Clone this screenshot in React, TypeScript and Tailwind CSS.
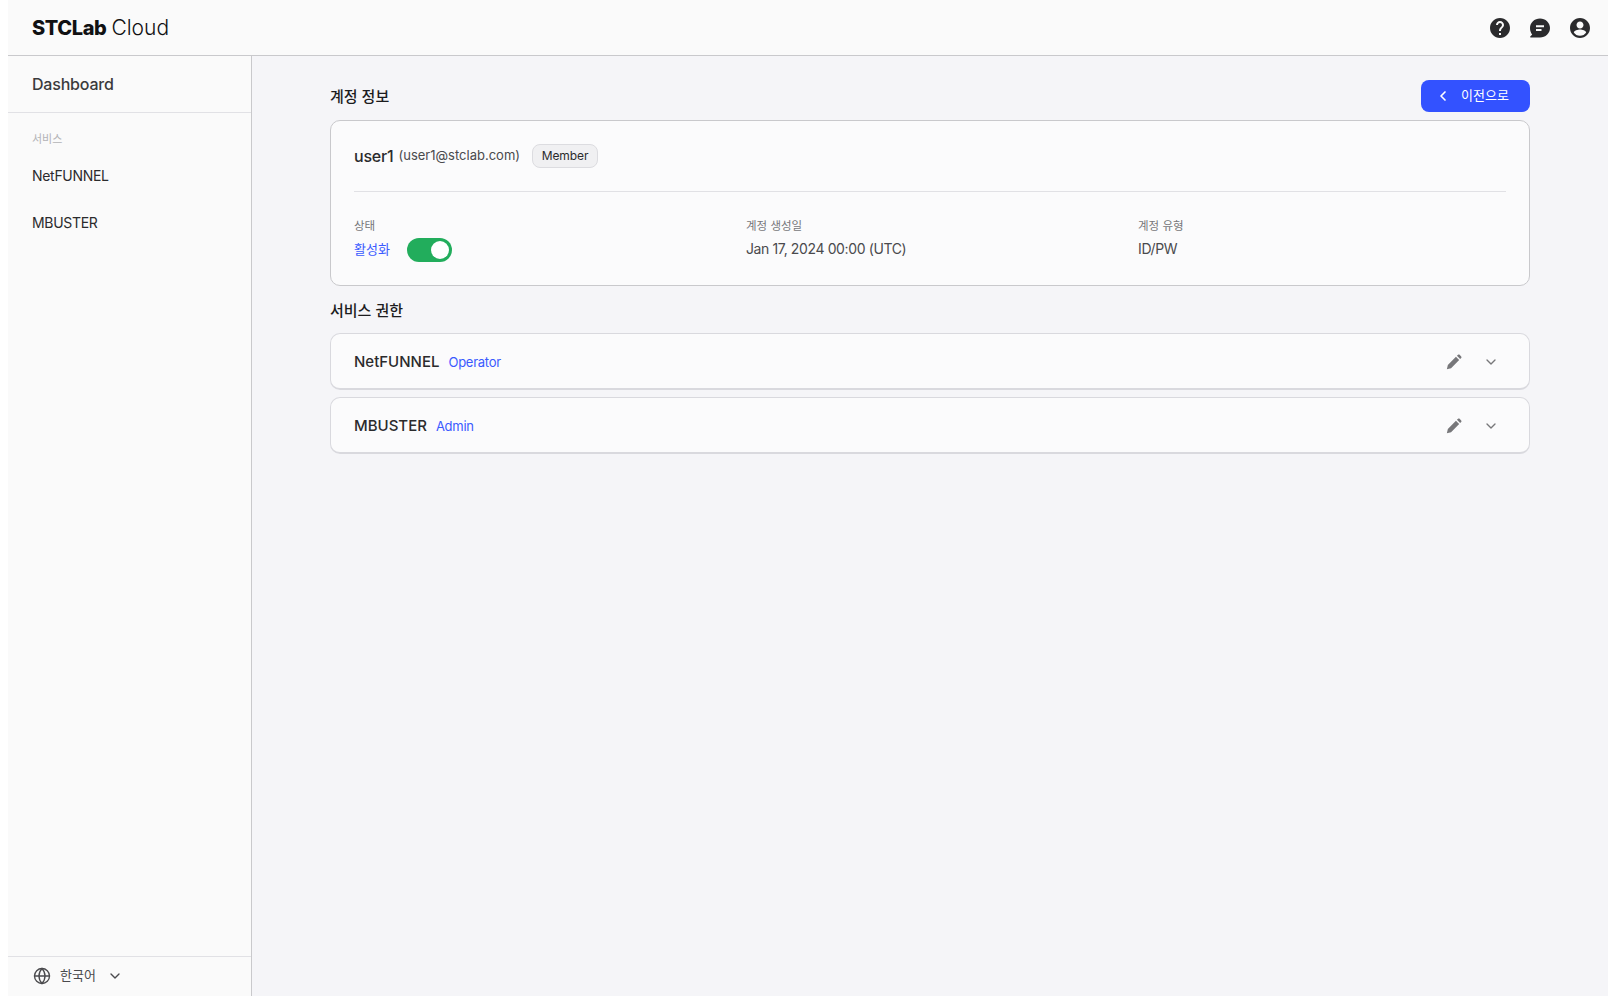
import { ChevronDown, ChevronLeft, Globe } from 'lucide-react'

const font = { fontFamily: 'Inter, "Noto Sans CJK KR", sans-serif' }

function HelpIcon() {
  return (
    <svg viewBox="0 0 24 24" className="w-6 h-6 fill-[#2b2b2d]">
      <path d="M12 2C6.48 2 2 6.48 2 12s4.48 10 10 10 10-4.48 10-10S17.52 2 12 2zm1 17h-2v-2h2v2zm2.07-7.75-.9.92C13.45 12.9 13 13.5 13 15h-2v-.5c0-1.1.45-2.1 1.17-2.83l1.24-1.26c.37-.36.59-.86.59-1.41 0-1.1-.9-2-2-2s-2 .9-2 2H8c0-2.21 1.79-4 4-4s4 1.79 4 4c0 .88-.36 1.68-.93 2.25z" />
    </svg>
  )
}

function ChatIcon() {
  return (
    <svg viewBox="0 0 24 24" className="w-6 h-6 fill-[#2b2b2d]">
      <path d="M12 2.5c5.5 0 10 4.2 10 9.5s-4.5 9.5-10 9.5H2.6c-.5 0-.7-.6-.3-.9l1.9-2.1C2.8 16.9 2 14.6 2 12c0-5.3 4.5-9.5 10-9.5zM8 9.2v2h8v-2H8zm0 3.8v2h5.5v-2H8z" fillRule="evenodd" />
    </svg>
  )
}

function UserIcon() {
  return (
    <svg viewBox="0 0 24 24" className="w-6 h-6 fill-[#2b2b2d]">
      <path d="M12 2C6.48 2 2 6.48 2 12s4.48 10 10 10 10-4.48 10-10S17.52 2 12 2zm0 3.5c1.93 0 3.5 1.57 3.5 3.5S13.93 12.5 12 12.5 8.5 10.93 8.5 9 10.07 5.5 12 5.5zm0 14.3c-2.6 0-4.9-1.3-6.2-3.3.03-2 4.1-3.1 6.2-3.1s6.17 1.1 6.2 3.1c-1.3 2-3.6 3.3-6.2 3.3z" />
    </svg>
  )
}

// slim slanted pencil with a separate eraser cap
function PencilIcon() {
  return (
    <svg viewBox="0 0 24 24" className="w-[18px] h-[18px] fill-[#77777a]">
      <path d="M2.5 21.5l1.3-5.6L14.6 5.1l4.3 4.3L8.1 20.2l-5.6 1.3zM15.9 3.8l1.5-1.4c.6-.6 1.5-.6 2.1 0l2.1 2.1c.6.6.6 1.5 0 2.1l-1.4 1.5-4.3-4.3z" />
    </svg>
  )
}

function ServiceRow({ name, role }: { name: string; role: string }) {
  return (
    <div className="h-[57px] rounded-[10px] border border-[#d9d9de] border-b-2 bg-[#fbfbfc] pl-[23px] pr-[30px] pt-[2px] flex items-center">
      <span className="text-[15px] font-medium text-[#2b2b2d]">{name}</span>
      <span className="ml-[9px] text-[13px] tracking-[-0.25px] translate-y-[1px] text-[#3a5aff]">{role}</span>
      <div className="ml-auto flex items-center gap-[20px]">
        <PencilIcon />
        <ChevronDown className="w-4 h-4 text-[#77777a]" strokeWidth={2} />
      </div>
    </div>
  )
}

export default function App() {
  return (
    <div className="w-full h-[1008px] bg-white pl-2 pb-3" style={font}>
      <div className="h-full flex flex-col bg-[#f5f5f8]">
        <header className="h-[56px] shrink-0 bg-[#fafafa] border-b border-[#c9c9cc] pl-[24px] pr-[16px] flex items-center justify-between">
          <div className="text-[20px] leading-none text-[#111113] flex items-baseline">
            <span className="font-extrabold tracking-[-0.4px]">STCLab</span>
            <span className="ml-[5px] font-light text-[21px]">Cloud</span>
          </div>
          <div className="flex items-center gap-[16px]">
            <HelpIcon />
            <ChatIcon />
            <UserIcon />
          </div>
        </header>

        <div className="flex-1 flex min-h-0">
          <aside className="w-[244px] shrink-0 bg-[#fafafa] border-r border-[#c9c9cc] flex flex-col">
            <div className="h-[57px] shrink-0 border-b border-[#e1e1e5] pl-[24px] flex items-center text-[16px] tracking-[-0.2px] font-medium text-[#3a3a3c]">
              Dashboard
            </div>
            <div className="pl-[24px] pt-[19px] flex-1">
              <div className="text-[11px] leading-[14px] text-[#b3b3b6]">서비스</div>
              <div className="mt-[19px] flex flex-col gap-[26px] text-[14px] tracking-[-0.3px] leading-[21px] text-[#2b2b2d]">
                <div>NetFUNNEL</div>
                <div>MBUSTER</div>
              </div>
            </div>
            <div className="h-[40px] shrink-0 border-t border-[#e1e1e5] pl-[25px] flex items-center text-[13px] text-[#4a4a4d]">
              <Globe className="w-[18px] h-[18px] -translate-y-[1px]" strokeWidth={1.8} />
              <span className="ml-[9px] -translate-y-[1px]">한국어</span>
              <ChevronDown className="ml-[11px] w-4 h-4 -translate-y-[1px]" strokeWidth={2} />
            </div>
          </aside>

          <main className="flex-1 pl-[78px] pr-[78px] pt-[24px]">
            <div className="h-[32px] flex items-center justify-between">
              <h2 className="text-[15px] font-medium text-[#1c1c1e] translate-y-[1px]">계정 정보</h2>
              <button className="w-[109px] h-[32px] rounded-[8px] bg-[#3352ff] text-white text-[13px] flex items-center pl-[14px]">
                <ChevronLeft className="w-4 h-4" strokeWidth={2.5} />
                <span className="ml-[10px]">이전으로</span>
              </button>
            </div>

            <section className="mt-[8px] h-[166px] rounded-[10px] border border-[#c9c9cc] bg-[#fbfbfc] px-[23px]">
              <div className="h-[71px] border-b border-[#e1e1e5] flex items-center">
                <span className="text-[16px] tracking-[-0.2px] font-medium text-[#2b2b2d]">user1</span>
                <span className="ml-[5px] text-[13px] text-[#4a4a4d]">(user1@stclab.com)</span>
                <span className="ml-[12px] h-[24px] w-[66px] rounded-[8px] border border-[#dcdce0] bg-[#f0f0f2] flex items-center justify-center text-[12px] tracking-[-0.1px] text-[#2b2b2d]">
                  Member
                </span>
              </div>
              <div className="grid grid-cols-3 gap-x-[24px] pt-[27px]">
                <div>
                  <div className="text-[11.5px] leading-[14px] text-[#77777a]">상태</div>
                  <div className="mt-[5px] flex items-center">
                    <span className="text-[13px] text-[#3a5aff]">활성화</span>
                    <span className="ml-[17px] w-[45px] h-[24px] rounded-full bg-[#22ad5c] flex items-center justify-end pr-[3px]">
                      <span className="w-[18px] h-[18px] rounded-full bg-white" />
                    </span>
                  </div>
                </div>
                <div>
                  <div className="text-[11.5px] leading-[14px] text-[#77777a]">계정 생성일</div>
                  <div className="mt-[3px] h-[24px] flex items-center text-[14px] tracking-[-0.38px] text-[#4a4a4d]">Jan 17, 2024 00:00 (UTC)</div>
                </div>
                <div>
                  <div className="text-[11.5px] leading-[14px] text-[#77777a]">계정 유형</div>
                  <div className="mt-[3px] h-[24px] flex items-center text-[14px] tracking-[-0.38px] text-[#4a4a4d]">ID/PW</div>
                </div>
              </div>
            </section>

            <h2 className="mt-[13px] text-[15px] leading-[24px] font-medium text-[#1c1c1e]">서비스 권한</h2>
            <div className="mt-[10px] flex flex-col gap-[7px]">
              <ServiceRow name="NetFUNNEL" role="Operator" />
              <ServiceRow name="MBUSTER" role="Admin" />
            </div>
          </main>
        </div>
      </div>
    </div>
  )
}
